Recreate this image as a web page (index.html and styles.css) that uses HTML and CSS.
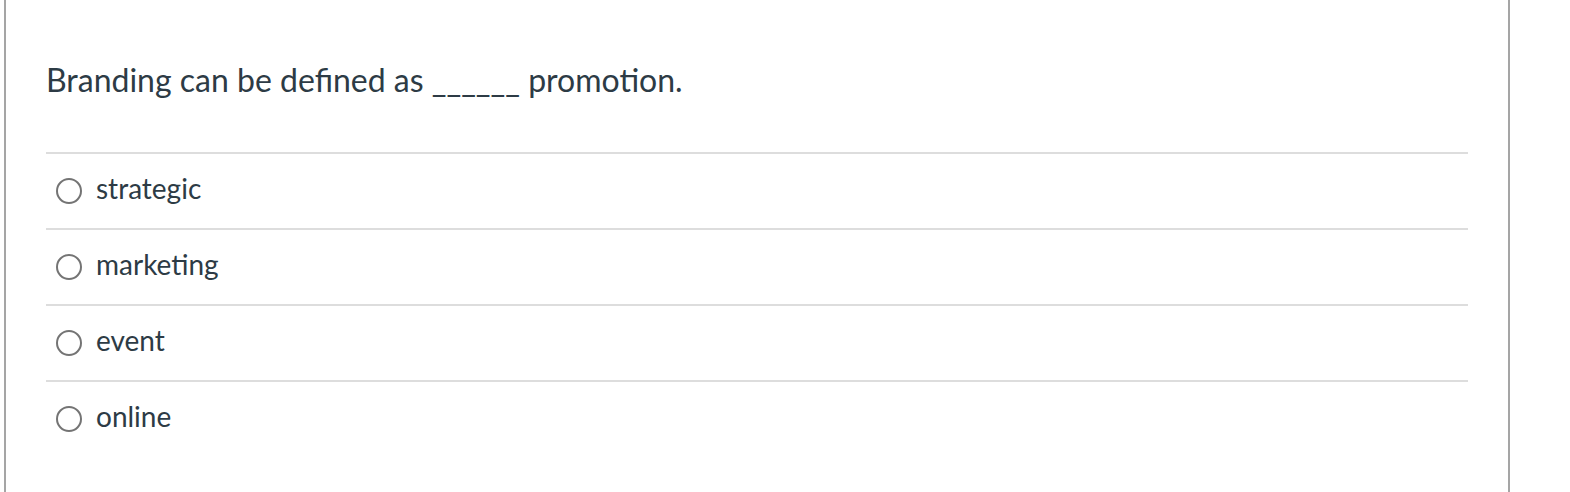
FILE: index.html
```html
<!DOCTYPE html>
<html>
<head>
<meta charset="utf-8">
<link rel="stylesheet" href="styles.css">
</head>
<body>
<div class="question">
  <div class="question-text">Branding can be defined as ______ promotion.</div>
  <div class="answers">
    <label class="answer"><span class="radio"></span><span class="label">strategic</span></label>
    <label class="answer"><span class="radio"></span><span class="label">marketing</span></label>
    <label class="answer"><span class="radio"></span><span class="label">event</span></label>
    <label class="answer"><span class="radio"></span><span class="label">online</span></label>
  </div>
</div>
</body>
</html>
```
FILE: styles.css
```css
html, body {
  margin: 0;
  padding: 0;
  background: #fff;
}
body {
  font-family: Lato, "Noto Sans", sans-serif;
  color: #2d3b45;
  overflow: hidden;
}
.question {
  margin-left: 4px;
  width: 1506px;
  min-height: 492px;
  border-left: 2px solid #a5a5a5;
  border-right: 2px solid #a5a5a5;
  box-sizing: border-box;
  padding: 60px 40px 0 40px;
}
.question-text {
  font-size: 32px;
  line-height: 40px;
  height: 40px;
}
.answers {
  margin-top: 52px;
}
.answer {
  display: flex;
  align-items: center;
  height: 74px;
  border-top: 2px solid #dddddd;
  font-size: 28px;
}
.radio {
  width: 22px;
  height: 22px;
  border: 2px solid #747474;
  border-radius: 50%;
  margin-left: 10px;
  margin-right: 14px;
  flex: none;
}
.label {
  line-height: 1;
  position: relative;
  top: -3px;
}
```
